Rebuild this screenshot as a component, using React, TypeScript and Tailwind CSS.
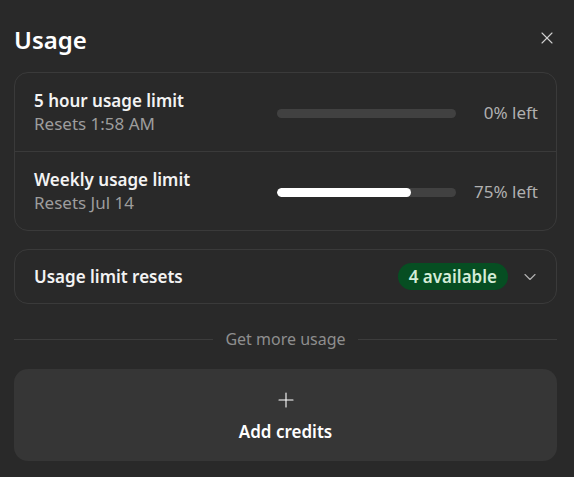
import { ChevronDown, Plus, X } from "lucide-react";

type Limit = { name: string; resets: string; left: number };

const limits: Limit[] = [
  { name: "5 hour usage limit", resets: "Resets 1:58 AM", left: 0 },
  { name: "Weekly usage limit", resets: "Resets Jul 14", left: 75 },
];

function LimitRow({ limit }: { limit: Limit }) {
  return (
    <div className="flex h-[78px] items-center pl-[19px] pr-[18px]">
      <div className="flex w-[243px] flex-col">
        <span className="text-[17px] font-semibold leading-[23px] text-[#f3f3f3]">{limit.name}</span>
        <span className="text-[17px] leading-[23px] text-[#9d9d9d]">{limit.resets}</span>
      </div>
      <div className="mt-[2px] h-[9px] w-[179px] overflow-hidden rounded-full bg-[#414141]">
        <div className="h-full rounded-full bg-white" style={{ width: `${limit.left}%` }} />
      </div>
      <span className="ml-auto mt-[1px] text-[17px] text-[#b0b0b0]">{limit.left}% left</span>
    </div>
  );
}

export default function App() {
  return (
    <div className="h-[477px] w-[574px] bg-[#292929] pl-[14px] pr-[17px] [font-family:'Noto_Sans',sans-serif]">
      <div className="flex h-[72px] items-center justify-between pt-[8px]">
        <h1 className="text-[24px] font-semibold text-white">Usage</h1>
        <X className="-mt-[4px] mr-0 h-[20px] w-[20px] text-[#d0d0d0]" strokeWidth={1.3} />
      </div>

      <div className="rounded-[14px] border border-[#3a3a3a]">
        <LimitRow limit={limits[0]} />
        <div className="h-px bg-[#3a3a3a]" />
        <LimitRow limit={limits[1]} />
      </div>

      <div className="mt-[18px] flex h-[55px] items-center rounded-[14px] border border-[#3a3a3a] pl-[19px] pr-[16px]">
        <span className="text-[17px] font-semibold text-[#f3f3f3]">Usage limit resets</span>
        <span className="ml-auto rounded-full bg-[#064e22] px-[11px] py-[1px] text-[17px] font-semibold text-[#d4ecd8]">
          4 available
        </span>
        <ChevronDown className="ml-[12px] h-[20px] w-[20px] text-[#b0b0b0]" strokeWidth={1.4} />
      </div>

      <div className="mt-[23px] flex items-center gap-[12px]">
        <div className="h-px flex-1 bg-[#3c3c3c]" />
        <span className="text-[16px] text-[#8e8e8e]">Get more usage</span>
        <div className="h-px flex-1 bg-[#3c3c3c]" />
      </div>

      <button className="mt-[18px] flex h-[92px] w-full flex-col items-center justify-center gap-[7px] rounded-[14px] bg-[#363636] pt-[2px]">
        <Plus className="h-[24px] w-[24px] text-white" strokeWidth={1.1} />
        <span className="text-[17px] font-semibold text-white">Add credits</span>
      </button>
    </div>
  );
}
